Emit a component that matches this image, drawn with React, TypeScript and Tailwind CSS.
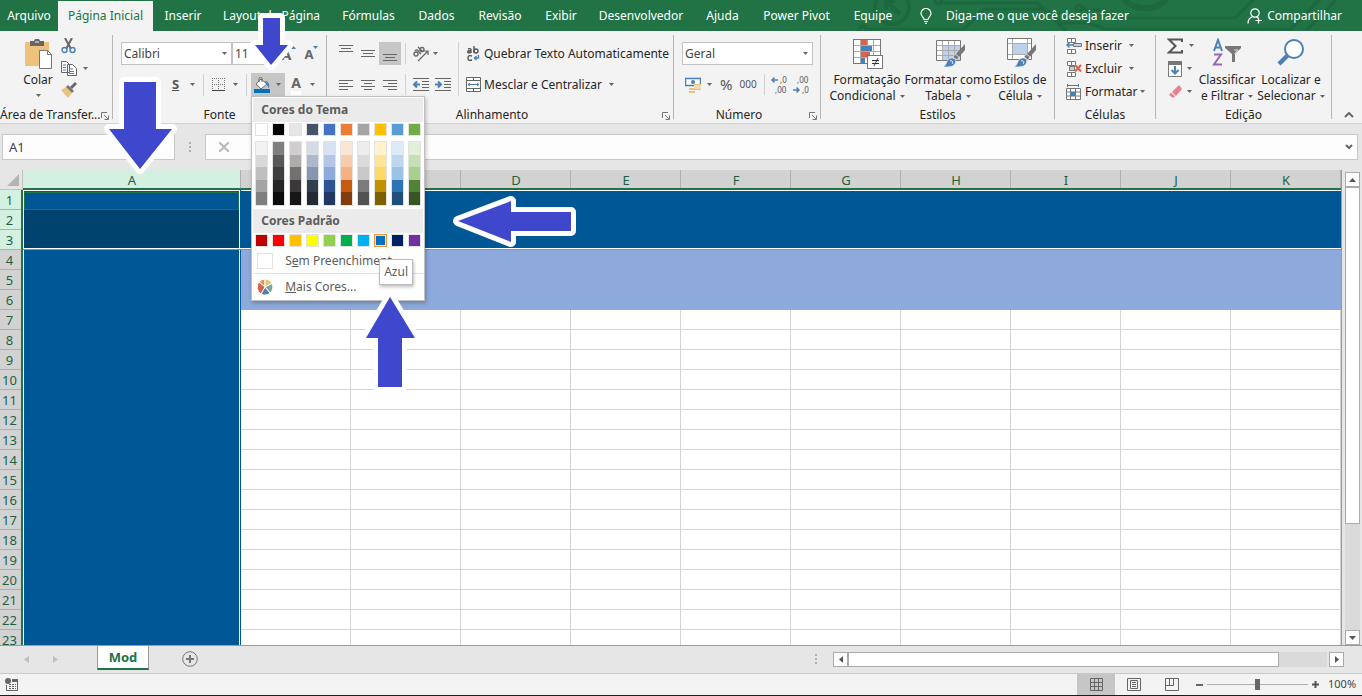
import type { ReactNode } from "react";

const tabs = [
  { label: "Arquivo", width: "w-[58px]" },
  { label: "Página Inicial", width: "w-[95px]", active: true },
  { label: "Inserir", width: "w-[60px]" },
  { label: "Layout da Página", width: "w-[117px]" },
  { label: "Fórmulas", width: "w-[77px]" },
  { label: "Dados", width: "w-[59px]" },
  { label: "Revisão", width: "w-[68px]" },
  { label: "Exibir", width: "w-[54px]" },
  { label: "Desenvolvedor", width: "w-[106px]" },
  { label: "Ajuda", width: "w-[57px]" },
  { label: "Power Pivot", width: "w-[91px]" },
  { label: "Equipe", width: "w-[62px]" },
];

const themeColors = [
  { base: "bg-white", shades: ["bg-[#f2f2f2]", "bg-[#d8d8d8]", "bg-[#bfbfbf]", "bg-[#a5a5a5]", "bg-[#7f7f7f]"] },
  { base: "bg-black", shades: ["bg-[#7f7f7f]", "bg-[#595959]", "bg-[#3f3f3f]", "bg-[#262626]", "bg-[#0c0c0c]"] },
  { base: "bg-[#e7e6e6]", shades: ["bg-[#d0cece]", "bg-[#aeabab]", "bg-[#757070]", "bg-[#3a3838]", "bg-[#171616]"] },
  { base: "bg-[#44546a]", shades: ["bg-[#d6dce4]", "bg-[#adb9ca]", "bg-[#8496b0]", "bg-[#323f4f]", "bg-[#222a35]"] },
  { base: "bg-[#4472c4]", shades: ["bg-[#d9e2f3]", "bg-[#b4c6e7]", "bg-[#8eaadb]", "bg-[#2f5496]", "bg-[#1f3864]"] },
  { base: "bg-[#ed7d31]", shades: ["bg-[#fbe5d5]", "bg-[#f7cbac]", "bg-[#f4b183]", "bg-[#c55a11]", "bg-[#833c0b]"] },
  { base: "bg-[#a5a5a5]", shades: ["bg-[#ededed]", "bg-[#dbdbdb]", "bg-[#c9c9c9]", "bg-[#7b7b7b]", "bg-[#525252]"] },
  { base: "bg-[#ffc000]", shades: ["bg-[#fff2cc]", "bg-[#fee599]", "bg-[#ffd965]", "bg-[#bf9000]", "bg-[#7f6000]"] },
  { base: "bg-[#5b9bd5]", shades: ["bg-[#deebf6]", "bg-[#bdd7ee]", "bg-[#9cc3e5]", "bg-[#2e75b5]", "bg-[#1e4e79]"] },
  { base: "bg-[#70ad47]", shades: ["bg-[#e2efd9]", "bg-[#c5e0b3]", "bg-[#a8d08d]", "bg-[#538135]", "bg-[#375623]"] },
];

const standardColors = [
  { name: "Vermelho-Escuro", fill: "bg-[#c00000]" },
  { name: "Vermelho", fill: "bg-[#ff0000]" },
  { name: "Laranja", fill: "bg-[#ffc000]" },
  { name: "Amarelo", fill: "bg-[#ffff00]" },
  { name: "Verde-Claro", fill: "bg-[#92d050]" },
  { name: "Verde", fill: "bg-[#00b050]" },
  { name: "Azul-Claro", fill: "bg-[#00b0f0]" },
  { name: "Azul", fill: "bg-[#0070c0]", selected: true },
  { name: "Azul-Escuro", fill: "bg-[#002060]" },
  { name: "Roxo", fill: "bg-[#7030a0]" },
];

const columns = ["A", "B", "C", "D", "E", "F", "G", "H", "I", "J", "K"];
const rows = Array.from({ length: 23 }, (_, i) => i + 1);

const arrows = [
  "124,82 156,82 156,129 172,129 140,169 109,129 124,129",
  "263,18 280,18 280,45 288,45 271,65 255,45 263,45",
  "571,212 571,231 511,231 511,242 458,221 511,201 511,212",
  "390,297 415,338 402,338 402,387 378,387 378,338 366,338",
];

function Caret({ className = "" }: { className?: string }) {
  return (
    <svg className={`h-[3px] w-[5px] shrink-0 ${className}`} viewBox="0 0 5 3" fill="#666">
      <path d="M0 0h5L2.5 3z" />
    </svg>
  );
}

function Separator({ className }: { className: string }) {
  return <div className={`w-px shrink-0 bg-[#d0d0d0] ${className}`} />;
}

function Group({ label, width, launcher, children }: { label: string; width: string; launcher?: boolean; children: ReactNode }) {
  return (
    <section className={`flex shrink-0 ${width}`} aria-label={label}>
      <div className="flex min-w-0 flex-1 flex-col">
        <div className="h-[75px]">{children}</div>
        <div className={`relative text-center leading-[17px] whitespace-nowrap ${launcher ? "pr-4" : ""}`}>
          {label}
          {launcher && (
            <button className="absolute right-[3px] top-[6px]" aria-label={`Mais opções de ${label}`}>
              <svg className="size-2" viewBox="0 0 8 8" fill="none" stroke="#777">
                <path d="M.5 6V.5H6M3 3l4 4M7.500 3.500v4h-4" />
              </svg>
            </button>
          )}
        </div>
      </div>
      <div className="my-1 w-px bg-[#b5b5b5]" />
    </section>
  );
}

function Combo({ label, value, width }: { label: string; value: string; width: string }) {
  return (
    <div className={`relative h-[23px] ${width}`}>
      <select aria-label={label} className="size-full appearance-none border border-[#c3c3c3] bg-white pl-[2px] text-[#444]">
        <option>{value}</option>
      </select>
      <Caret className="pointer-events-none absolute right-[5px] top-[10px]" />
    </div>
  );
}

function Lines({ widths, align }: { widths: number[]; align: "start" | "middle" | "end" }) {
  return (
    <svg width="14" height={widths.length * 3} shapeRendering="crispEdges" stroke="#666">
      {widths.map((w, i) => {
        const x = align === "start" ? 0 : align === "end" ? 14 - w : (14 - w) / 2;
        return <path key={i} d={`M${x} ${i * 3 + 1.5}h${w}`} />;
      })}
    </svg>
  );
}

function BigButton({ icon, lines, width }: { icon: ReactNode; lines: [string, string]; width: string }) {
  return (
    <button className={`flex h-[75px] flex-col items-center pt-[7px] leading-4 whitespace-nowrap ${width}`}>
      <span className="flex h-[34px] items-start">{icon}</span>
      <span>{lines[0]}</span>
      <span className="flex items-center gap-1">
        {lines[1]}
        <Caret />
      </span>
    </button>
  );
}

function Brush() {
  return (
    <>
      <path d="M29 6v6l-6 7-3-3z" fill="#777" />
      <path d="M19 16l4 3-2 3-4-3z" fill="#777" stroke="#f3f3f3" strokeWidth=".6" />
      <path d="M7 29c4-1 3-9 9-9 4 0 5 4 2 7-2 2-7 2-11 2z" fill="#4a80b8" stroke="#f3f3f3" strokeWidth=".6" />
      <path d="M14 23c2-1 4 1 2 3" fill="none" stroke="#fff" />
    </>
  );
}

function ColorMenu() {
  return (
    <div className="absolute left-0 top-full z-20 w-[174px] border border-[#c0c0c0] bg-white pt-px text-left text-[#5c5c5c] shadow-[1px_2px_4px_rgba(0,0,0,0.25)]">
      <h3 className="mx-px bg-[#ebebeb] pl-2 font-bold leading-6">Cores do Tema</h3>
      <div className="flex gap-1 px-[3px] pt-px">
        {themeColors.map((c) => (
          <div key={c.base} className="flex flex-col gap-[5px]">
            <button aria-label="Cor do tema" className={`size-[13px] border border-[#e2e2e2] ${c.base}`} />
            <div className="flex h-[65px] w-[13px] flex-col border border-[#e2e2e2]">
              {c.shades.map((s) => (
                <button key={s} aria-label="Tonalidade" className={`flex-1 ${s}`} />
              ))}
            </div>
          </div>
        ))}
      </div>
      <h3 className="mx-px mt-[3px] bg-[#ebebeb] pl-2 font-bold leading-6">Cores Padrão</h3>
      <div className="flex gap-1 px-[3px] pt-px">
        {standardColors.map((c) => (
          <div key={c.name} className="relative flex">
            <button
              aria-label={c.name}
              className={`size-[13px] border ${c.fill} ${c.selected ? "border-[#f29436] shadow-[inset_0_0_0_1px_#ffe294]" : "border-[#e2e2e2]"}`}
            />
            {c.selected && (
              <span className="absolute left-[5px] top-[25px] border border-[#bdbdbd] bg-white px-1 leading-6 shadow-[1px_2px_3px_rgba(0,0,0,0.25)]">
                Azul
              </span>
            )}
          </div>
        ))}
      </div>
      <button className="flex h-[26px] w-full items-center gap-3 pl-[5px] pt-[2px]">
        <span className="size-4 border border-[#e2e2e2]" />
        <span>
          S<u>e</u>m Preenchiment
        </span>
      </button>
      <div className="mx-px h-px bg-[#e2e2e2]" />
      <button className="flex h-[26px] w-full items-center gap-3 pl-[5px]">
        <svg className="size-4" viewBox="0 0 16 16" stroke="#fff">
          <path d="M8 8L2 3A8 8 0 0 1 8 0z" fill="#e8914a" />
          <path d="M8 8V0a8 8 0 0 1 7 4.500z" fill="#ecc078" />
          <path d="M8 8l7-3.500A8 8 0 0 1 13 14z" fill="#78a898" />
          <path d="M8 8l5 6a8 8 0 0 1-9 1z" fill="#4a80b8" />
          <path d="M8 8l-4 7A8 8 0 0 1 2 3z" fill="#d9624a" />
        </svg>
        <span>
          <u>M</u>ais Cores...
        </span>
      </button>
    </div>
  );
}

function TitleBar() {
  return (
    <header className="relative h-[31px] shrink-0 bg-[#217346] text-white">
      <svg className="absolute right-0 top-0 h-[31px] w-[512px]" viewBox="850 0 512 31" fill="none" stroke="#1e683f" strokeWidth="4">
        <circle cx="892" cy="7" r="17" />
        <path d="M900 14L886 1M886 10V1h9" />
        <circle cx="863" cy="29" r="3" strokeWidth="3" />
        <circle cx="938" cy="1" r="3" strokeWidth="3" />
        <path d="M941 3h96l24 20h27l18 6h185l30-31M866 29h98l20-20h60l22 22M1082 7l5 3h12l20 8h116l20-20M1306 31l30-31" strokeWidth="3" />
        <circle cx="1079" cy="8" r="3" strokeWidth="3" />
        <path d="M1122-4a24 17 0 0 0 46 0" strokeWidth="6" />
      </svg>
      <div className="relative flex h-full items-center">
        <nav className="flex h-full items-end">
          {tabs.map((t) => (
            <button
              key={t.label}
              className={`h-[30px] pb-px text-center whitespace-nowrap ${t.width} ${t.active ? "bg-[#f3f3f3] text-[#217346]" : ""}`}
            >
              {t.label}
            </button>
          ))}
        </nav>
        <button className="ml-4 flex items-center gap-[14px] whitespace-nowrap">
          <svg className="h-4 w-3" viewBox="0 0 12 16" fill="none" stroke="#fff" strokeWidth="1.200">
            <path d="M4 11.500C4 9 1 8.500 1 5.500a5 5 0 0 1 10 0C11 8.500 8 9 8 11.500zM4 13.500h4M5 15.300h2" />
          </svg>
          Diga-me o que você deseja fazer
        </button>
        <button className="ml-auto mr-[20px] flex items-center gap-1">
          <svg className="size-4" viewBox="0 0 16 16" fill="none" stroke="#fff" strokeWidth="1.200">
            <circle cx="8" cy="5" r="4.200" />
            <path d="M1 15.500C1 11.500 3 9.500 5.500 8.800M9.500 9l1.500 1M11.500 9.500v6M8.500 12.500h6.500" />
          </svg>
          Compartilhar
        </button>
      </div>
    </header>
  );
}

function Ribbon() {
  return (
    <div className="flex h-[93px] shrink-0 border-b border-[#d2d2d2] bg-[#f3f3f3] text-[#262626]">
      <Group label="Área de Transfer..." width="w-[113px]" launcher>
        <div className="flex">
          <div className="ml-[18px]">
            <button className="flex w-10 flex-col items-center pt-2 leading-4" aria-label="Colar">
              <svg className="h-[33px] w-8" viewBox="0 0 32 33">
                <path d="M3 3h24v24H3z" fill="#ecc27c" />
                <path d="M8 2h4c0-3 6-3 6 0h4v5H8z" fill="#666" />
                <path d="M13 3h4" stroke="#f3f3f3" />
                <path d="M17.500 11.500h8l4 4v14h-12z" fill="#fff" stroke="#777" />
                <path d="M25.500 11.500v4h4" fill="none" stroke="#777" />
              </svg>
              Colar
              <Caret className="mt-[6px]" />
            </button>
          </div>
          <div className="flex flex-col pl-[3px] pt-[6px]">
            <button className="h-[18px]" aria-label="Recortar">
              <svg className="h-4 w-[15px]" viewBox="0 0 15 16" fill="none">
                <path d="M4 0l6 11M11 0L5 11" stroke="#666" strokeWidth="2" />
                <circle cx="3.500" cy="12" r="2.500" stroke="#4a80b8" strokeWidth="1.400" />
                <circle cx="11.500" cy="12" r="2.500" stroke="#4a80b8" strokeWidth="1.400" />
              </svg>
            </button>
            <button className="flex h-[26px] items-center gap-[6px]" aria-label="Copiar">
              <svg className="h-[15px] w-4" viewBox="0 0 16 15" fill="#fff" stroke="#666">
                <path d="M.5.5h5l3 3v8h-8zM6.500 3.500h5l4 4v7h-9z" />
                <path d="M2 4h3M2 6.500h3M2 9h3M8 8h4M8 10.500h5M8 12.500h5" stroke="#4a80b8" />
              </svg>
              <Caret />
            </button>
            <button className="mt-px" aria-label="Pincel de Formatação">
              <svg className="size-4" viewBox="0 0 16 16">
                <path d="M0 8l5-3 6 6-4 5z" fill="#ecc27c" />
                <path d="M5 5l2-2 6 6-2 2z" fill="#777" />
                <path d="M9 5l5-5 2 2-5 5z" fill="#666" />
              </svg>
            </button>
          </div>
        </div>
      </Group>

      <Group label="Fonte" width="w-[214px]">
        <div className="flex flex-col gap-2 pl-2 pt-[11px]">
          <div className="flex items-center">
            <Combo label="Fonte" value="Calibri" width="w-[111px]" />
            <Combo label="Tamanho da fonte" value="11" width="w-[38px]" />
            <button className="ml-[11px] flex items-start text-[15px] font-bold leading-4 text-[#666]" aria-label="Aumentar fonte">
              A
              <svg className="h-[3px] w-[5px]" viewBox="0 0 5 3" fill="#4a80b8">
                <path d="M0 3h5L2.500 0z" />
              </svg>
            </button>
            <button className="ml-2 flex items-start text-[13px] font-bold leading-4 text-[#666]" aria-label="Diminuir fonte">
              A
              <svg className="h-[3px] w-[5px]" viewBox="0 0 5 3" fill="#4a80b8">
                <path d="M0 0h5L2.500 3z" />
              </svg>
            </button>
          </div>
          <div className="flex h-[23px] items-center">
            <button className="ml-[51px] flex items-center gap-[11px] text-[13px] font-bold text-[#555]">
              <u>S</u>
              <Caret />
            </button>
            <Separator className="ml-2 h-[22px]" />
            <button className="ml-2 flex items-center gap-2" aria-label="Bordas">
              <svg className="size-[13px]" viewBox="0 0 13 13" stroke="#777" fill="none" shapeRendering="crispEdges">
                <path d="M0 .5h13M0 6.500h13M.5 0v13M6.500 0v13M12.500 0v13" strokeDasharray="1 1" />
                <path d="M0 12.500h13" stroke="#444" />
              </svg>
              <Caret />
            </button>
            <Separator className="ml-2 h-[22px]" />
            <div className="relative ml-1">
              <button className="flex h-[23px] w-[34px] items-center gap-[6px] bg-[#c6c6c6] pl-[3px]" aria-label="Cor de Preenchimento">
                <svg className="size-4" viewBox="0 0 16 16">
                  <path d="M2 7l5-5 6 5-6 5z" fill="#fff" stroke="#666" />
                  <path d="M5 5V1.500c0-1.500 3-1.500 3 0V5" fill="none" stroke="#666" />
                  <path d="M11 4c3 0 5 3 4 7l-3-4z" fill="#4a80b8" />
                  <path d="M0 12h16v4H0z" fill="#0070c0" />
                </svg>
                <Caret />
              </button>
              <ColorMenu />
            </div>
            <button className="ml-[6px] flex items-center gap-[9px] text-[14px] font-bold text-[#666]" aria-label="Cor da Fonte">
              <span className="border-b-4 border-white leading-4">A</span>
              <Caret />
            </button>
          </div>
        </div>
      </Group>

      <Group label="Alinhamento" width="w-[347px]" launcher>
        <div className="flex pl-2 pt-[11px]">
          <div className="flex flex-col gap-2">
            <div className="flex h-[23px] items-center">
              <button className="h-full w-[22px] pb-[10px] pl-1" aria-label="Alinhar em Cima"><Lines widths={[14, 10, 14]} align="middle" /></button>
              <button className="h-full w-[22px] pl-1" aria-label="Alinhar no Meio"><Lines widths={[14, 10, 14]} align="middle" /></button>
              <button className="h-full w-[22px] bg-[#c6c6c6] pl-1 pt-2" aria-label="Alinhar Embaixo"><Lines widths={[14, 10, 14]} align="middle" /></button>
              <Separator className="ml-1 h-[21px]" />
              <button className="ml-[7px] flex items-center gap-1" aria-label="Orientação">
                <svg className="size-4" viewBox="0 0 16 16" fill="none" stroke="#666">
                  <circle cx="3" cy="8" r="2" strokeWidth="1.400" />
                  <path d="M2 5c1-2 3-1 4 1l2 2M5 1l5 5" strokeWidth="1.400" />
                  <circle cx="9" cy="3.500" r="2" strokeWidth="1.400" />
                  <path d="M5 15L15 5M11 5h4v4" strokeWidth="1.200" />
                </svg>
                <Caret />
              </button>
            </div>
            <div className="flex h-[23px] items-center">
              <button className="w-[22px] pl-1" aria-label="Alinhar à Esquerda"><Lines widths={[14, 9, 14, 9]} align="start" /></button>
              <button className="w-[22px] pl-1" aria-label="Centralizar"><Lines widths={[14, 8, 14, 8]} align="middle" /></button>
              <button className="w-[22px] pl-1" aria-label="Alinhar à Direita"><Lines widths={[14, 9, 14, 9]} align="end" /></button>
              <Separator className="ml-1 h-[21px]" />
              <button className="ml-[7px]" aria-label="Diminuir Recuo">
                <svg className="h-[13px] w-4" viewBox="0 0 16 13" stroke="#666">
                  <path d="M0 .5h16M9 3.500h7M9 6.500h7M9 9.500h7M0 12.500h16" />
                  <path d="M2 6.500h5M4 3.500L1 6.500l3 3" fill="none" stroke="#4a80b8" strokeWidth="2" />
                </svg>
              </button>
              <button className="ml-[6px]" aria-label="Aumentar Recuo">
                <svg className="h-[13px] w-4" viewBox="0 0 16 13" stroke="#666">
                  <path d="M0 .5h16M9 3.500h7M9 6.500h7M9 9.500h7M0 12.500h16" />
                  <path d="M0 6.500h5M3 3.500l3 3-3 3" fill="none" stroke="#4a80b8" strokeWidth="2" />
                </svg>
              </button>
            </div>
          </div>
          <Separator className="ml-[7px] h-[54px]" />
          <div className="ml-[7px] flex flex-col gap-2 whitespace-nowrap">
            <button className="flex h-[23px] items-center gap-[3px]">
              <svg className="size-[15px]" viewBox="0 0 15 15" fill="none" stroke="#555" strokeWidth="1.400">
                <path d="M2 3c3-1 3 0 3 1v3M5 5c-4-1-4 2-2 2l2-1M8 0v7" />
                <circle cx="10" cy="5" r="2" />
                <path d="M6 10c-3-1-4 0-4 2s1 3 4 2" />
                <path d="M12.500 9v3H9M10.500 10l-2 2 2 2" stroke="#4a80b8" />
              </svg>
              Quebrar Texto Automaticamente
            </button>
            <button className="flex h-[23px] items-center gap-[3px]">
              <svg className="size-[15px]" viewBox="0 0 15 15" fill="#fff" stroke="#666">
                <path d="M.5.5h14v14H.5zM.5 3.500h14M.5 11.500h14M7.500.5v3M7.500 11.500v3" />
                <path d="M2 7.500h11M4 6L2 7.500 4 9M11 6l2 1.500L11 9" fill="none" stroke="#4a80b8" />
              </svg>
              Mesclar e Centralizar
              <Caret className="ml-1" />
            </button>
          </div>
        </div>
      </Group>

      <Group label="Número" width="w-[147px]" launcher>
        <div className="flex flex-col gap-2 pl-2 pt-[11px]">
          <Combo label="Formato de número" value="Geral" width="w-[131px]" />
          <div className="flex h-[23px] items-center text-[#555]">
            <button className="ml-[3px] flex items-center gap-[6px]" aria-label="Formato de Contabilização">
              <svg className="size-4" viewBox="0 0 16 16">
                <path d="M.5 1.500h15v7H.5z" fill="#fff" stroke="#4a80b8" strokeWidth="1.500" />
                <circle cx="8" cy="5" r="2" fill="#4a80b8" />
                <path d="M9 7h7v6H9zM4 11h6v5H4z" fill="#ecc27c" />
                <path d="M9 9h7M9 11h7M4 13.500h6" stroke="#f3f3f3" />
              </svg>
              <Caret />
            </button>
            <button className="ml-2 text-[15px]">%</button>
            <button className="ml-[7px] text-[10px]">000</button>
            <Separator className="ml-[7px] h-[21px]" />
            <button className="ml-[6px]" aria-label="Aumentar Casas Decimais">
              <svg className="h-5 w-4 overflow-visible" viewBox="0 0 16 20" fill="#555" fontSize="8">
                <text x="9" y="8">,0</text>
                <text x="4" y="18">,00</text>
                <path d="M1 5h6M3.500 2.500L1 5l2.500 2.500" fill="none" stroke="#4a80b8" strokeWidth="1.500" />
              </svg>
            </button>
            <button className="ml-[6px]" aria-label="Diminuir Casas Decimais">
              <svg className="h-5 w-4 overflow-visible" viewBox="0 0 16 20" fill="#555" fontSize="8">
                <text x="4" y="8">,00</text>
                <text x="9" y="18">,0</text>
                <path d="M0 15h6M3.500 12.500L6 15l-2.500 2.500" fill="none" stroke="#4a80b8" strokeWidth="1.500" />
              </svg>
            </button>
          </div>
        </div>
      </Group>

      <Group label="Estilos" width="w-[234px]">
        <div className="flex pl-[6px]">
          <BigButton
            width="w-20"
            lines={["Formatação", "Condicional"]}
            icon={
              <svg className="size-[31px]" viewBox="0 0 31 31" shapeRendering="crispEdges">
                <path d="M1.500 1.500h27v24h-27z" fill="#fff" />
                <path d="M9 2h6v5H9zM9 14h9v5H9z" fill="#d9624a" />
                <path d="M9 8h11v5H9zM9 20h4v6H9z" fill="#4a80b8" />
                <path d="M1 7.500h28M1 13.500h28M1 19.500h28M8.500 1v25M15.500 1v6M21.500 1v25" fill="none" stroke="#aaa" />
                <path d="M1.500 1.500h27v24h-27z" fill="none" stroke="#777" />
                <path d="M15.500 17.500h15v13h-15z" fill="#fff" stroke="#777" />
                <path d="M20 22.500h7M20 25.500h7" stroke="#333" />
                <path d="M26 20l-4 8" stroke="#333" shapeRendering="auto" />
              </svg>
            }
          />
          <BigButton
            width="w-[82px]"
            lines={["Formatar como", "Tabela"]}
            icon={
              <svg className="ml-[6px] size-[30px]" viewBox="0 0 30 30">
                <path d="M.5 2.500h24v20H.5z" fill="#fff" />
                <path d="M7 8h18v14H7z" fill="#bdd2ea" />
                <path d="M0 7.500h24M0 12.500h24M0 17.500h24M6.500 2v20M12.500 2v20M18.500 2v20" stroke="#aaa" />
                <path d="M.5 2.500h24v20H.5z" fill="none" stroke="#777" />
                <Brush />
              </svg>
            }
          />
          <BigButton
            width="w-[62px]"
            lines={["Estilos de", "Célula"]}
            icon={
              <svg className="ml-1 size-[30px]" viewBox="0 0 30 30">
                <path d="M.5.5h24v21H.5z" fill="#fff" />
                <path d="M6 6h14v10H6z" fill="#bdd2ea" />
                <path d="M0 5.500h24M0 16.500h24M5.500 0v22M20.500 0v22" stroke="#aaa" />
                <path d="M.5.5h24v21H.5z" fill="none" stroke="#777" />
                <Brush />
              </svg>
            }
          />
        </div>
      </Group>

      <Group label="Células" width="w-[101px]">
        <div className="flex flex-col pl-[11px] pt-[3px]">
          <button className="flex h-[23px] items-center gap-[3px]">
            <svg className="size-4" viewBox="0 0 16 16" fill="#fff" stroke="#777">
              <path d="M1.500.5h8v4h-8zM5.500.5v4M1.500 11.500h8v4h-8zM5.500 11.500v4" />
              <path d="M7.500 5.500h8v3h-8z" fill="#bdd2ea" />
              <path d="M1 7h6M3.500 4.500L1 7l2.500 2.500" fill="none" stroke="#4a80b8" strokeWidth="1.500" />
            </svg>
            Inserir
            <Caret className="ml-1" />
          </button>
          <button className="flex h-[23px] items-center gap-[3px]">
            <svg className="size-4" viewBox="0 0 16 16" fill="#fff" stroke="#777">
              <path d="M1.500.5h8v4h-8zM5.500.5v4M1.500 11.500h8v4h-8zM5.500 11.500v4" />
              <path d="M3.500 5.500h5v4h-5z" fill="#bdd2ea" />
              <path d="M9 4l6 6.500M15 4L9 10.500" stroke="#d9624a" strokeWidth="2" />
            </svg>
            Excluir
            <Caret className="ml-1" />
          </button>
          <button className="flex h-[23px] items-center gap-[3px]">
            <svg className="size-4" viewBox="0 0 16 16" fill="#fff" stroke="#777">
              <path d="M.5 4.500h14v11H.5zM.5 8h14M.5 12h14M4.500 4.500v11M9.500 4.500v11" />
              <path d="M4 8h6v4H4z" fill="#4a80b8" stroke="none" />
              <path d="M1 1.500h12M1.500 0v3M12.500 0v3" stroke="#4a80b8" />
            </svg>
            Formatar
            <Caret />
          </button>
        </div>
      </Group>

      <Group label="Edição" width="w-[176px]">
        <div className="flex pl-[11px]">
          <div className="flex w-[27px] flex-col pt-[3px]">
            <button className="flex h-[23px] items-center gap-[6px]" aria-label="AutoSoma">
              <svg className="size-4" viewBox="0 0 16 16" fill="none" stroke="#555" strokeWidth="2">
                <path d="M15 4V1.500H2L8.500 8 2 14.500h13V12" />
              </svg>
              <Caret />
            </button>
            <button className="flex h-[23px] items-center gap-1" aria-label="Preencher">
              <svg className="size-4" viewBox="0 0 16 16" fill="#fff" stroke="#777">
                <path d="M1.500.5h13v15h-13z" />
                <path d="M1.500.5h13v3h-13z" fill="#777" />
                <path d="M8 5v7M4.500 9L8 12.500 11.500 9" fill="none" stroke="#4a80b8" strokeWidth="2" />
              </svg>
              <Caret />
            </button>
            <button className="flex h-[23px] items-center gap-1" aria-label="Limpar">
              <svg className="size-4" viewBox="0 0 16 16">
                <path d="M5 8l7-7 3 4-6 7z" fill="#e88090" />
                <path d="M4 8.500l4 4L6 14 2 11z" fill="#e88090" />
              </svg>
              <Caret />
            </button>
          </div>
          <BigButton
            width="w-[66px]"
            lines={["Classificar", "e Filtrar"]}
            icon={
              <svg className="h-[30px] w-8" viewBox="0 0 32 30" fill="none">
                <path d="M3 13L7 2l4 11M4.500 9.500h5" stroke="#4a80b8" strokeWidth="2" />
                <path d="M3 16.500h7L3 26.500h8" stroke="#9a64b8" strokeWidth="2" />
                <path d="M14 8h16v2l-6 6v8h-3v-8l-7-6z" fill="#777" />
                <path d="M23 12h4l-3.500 4" stroke="#ddd" />
              </svg>
            }
          />
          <BigButton
            width="w-[62px]"
            lines={["Localizar e", "Selecionar"]}
            icon={
              <svg className="h-[30px] w-8" viewBox="0 0 32 30" fill="none" stroke="#4a80b8">
                <path d="M4 26l9-9" strokeWidth="4.500" />
                <circle cx="19" cy="11" r="9" fill="#fff" strokeWidth="2" />
              </svg>
            }
          />
        </div>
      </Group>

      <button className="ml-auto mr-2 mt-auto mb-[5px]" aria-label="Recolher a Faixa de Opções">
        <svg className="h-[6px] w-[10px]" viewBox="0 0 10 6" fill="none" stroke="#666" strokeWidth="2">
          <path d="M1 5l4-4 4 4" />
        </svg>
      </button>
    </div>
  );
}

function FormulaBar() {
  return (
    <div className="flex h-[46px] shrink-0 items-start bg-[#e6e6e6] pl-[2px] pr-1 pt-[10px] text-[13px] text-[#444]">
      <input aria-label="Caixa de nome" defaultValue="A1" className="h-[26px] w-[173px] border border-[#c8c8c8] bg-[#fdfdfd] px-[6px]" />
      <svg className="ml-[14px] mt-2 h-[11px] w-[3px]" fill="#b0b0b0">
        <path d="M0 0h2v2H0zM0 4h2v2H0zM0 8h2v2H0z" />
      </svg>
      <div className="ml-[13px] flex h-[26px] flex-1 items-center border border-[#c8c8c8] bg-[#fdfdfd]">
        <button className="ml-[13px]" aria-label="Cancelar">
          <svg className="size-[10px]" viewBox="0 0 10 10" stroke="#b8b8b8" strokeWidth="2">
            <path d="M0 0l10 10M10 0L0 10" />
          </svg>
        </button>
        <input aria-label="Barra de fórmulas" className="h-full flex-1 bg-transparent px-2 outline-none" />
        <button className="mr-1" aria-label="Expandir barra de fórmulas">
          <svg className="h-[6px] w-2" viewBox="0 0 8 6" fill="none" stroke="#666" strokeWidth="2">
            <path d="M1 1l3 3 3-3" />
          </svg>
        </button>
      </div>
    </div>
  );
}

// the selection frame is drawn with inset shadows so it runs unbroken across rows
function cellClass(row: number, col: number) {
  if (col === 0) {
    if (row === 1) return "bg-[#005796] shadow-[inset_-1px_0_0_#005796,inset_-2px_0_0_#fff,inset_1px_1px_0_#fff]";
    if (row === 2) return "bg-[#00436f] shadow-[inset_-1px_0_0_#005796,inset_-2px_0_0_#fff,inset_1px_0_0_#fff]";
    if (row === 3) return "bg-[#00436f] shadow-[inset_0_-1px_0_#7f93ad,inset_0_-2px_0_#fff,inset_-1px_0_0_#005796,inset_-2px_0_0_#fff,inset_1px_0_0_#fff]";
    return "bg-[#005796] shadow-[inset_-1px_0_0_#005796,inset_-2px_0_0_#fff,inset_1px_0_0_#fff]";
  }
  if (row === 1) return "bg-[#005796] shadow-[inset_0_1px_0_#fff]";
  if (row === 2) return "bg-[#005796]";
  if (row === 3) return "bg-[#005796] shadow-[inset_0_-1px_0_#7f93ad,inset_0_-2px_0_#fff]";
  if (row <= 6) return "bg-[#8ea9db]";
  return "border-b border-r border-[#d4d4d4] bg-white";
}

function Sheet() {
  return (
    <main className="flex min-h-0 flex-1 bg-[#e6e6e6]">
      <div className="min-w-0 flex-1 overflow-hidden">
        <table className="w-full table-fixed border-separate border-spacing-0 text-[13px] leading-[18px] text-[#1f5f43]">
          <colgroup>
            <col className="w-[23px]" />
            <col className="w-[218px]" />
            {columns.slice(1).map((c) => (
              <col key={c} />
            ))}
          </colgroup>
          <thead>
            <tr>
              <th className="h-5 border-b border-r border-[#c0c0c0] bg-[#e6e6e6] p-0 pl-[7px]" aria-label="Selecionar tudo">
                <svg className="size-3" viewBox="0 0 12 12" fill="#b4b4b4">
                  <path d="M12 0v12H0z" />
                </svg>
              </th>
              {columns.map((c, i) => (
                <th
                  key={c}
                  className={`h-5 p-0 font-normal shadow-[inset_0_-2px_0_#217346,inset_-1px_0_0_#b0b0b0] ${i === 0 ? "bg-[#d3f0e0]" : "bg-[#d2d2d2]"}`}
                >
                  {c}
                </th>
              ))}
            </tr>
          </thead>
          <tbody>
            {rows.map((r) => (
              <tr key={r}>
                <th
                  className={`h-5 p-0 pr-1 font-normal shadow-[inset_-2px_0_0_#217346,inset_0_-1px_0_#b0b0b0] ${r <= 3 ? "bg-[#d3f0e0]" : "bg-[#d2d2d2]"}`}
                >
                  {r}
                </th>
                {columns.map((c, i) => (
                  <td key={c} className={`p-0 ${cellClass(r, i)}`}>
                    {r === 1 && i === 0 && <div className="ml-px mr-[2px] mt-px h-[18px] border border-[#217346]" />}
                  </td>
                ))}
              </tr>
            ))}
          </tbody>
        </table>
      </div>
      <div className="flex w-[21px] justify-end border-l border-[#9b9b9b] pr-[2px] pt-[2px]">
        <div className="flex w-[15px] flex-col bg-[#dadada]">
          <button className="flex h-[15px] items-center justify-center border border-[#ababab] bg-white" aria-label="Rolar para cima">
            <svg className="h-1 w-[7px]" viewBox="0 0 7 4" fill="#555"><path d="M0 4h7L3.500 0z" /></svg>
          </button>
          <div className="h-[337px] border border-[#ababab] bg-white" />
          <button className="mt-auto flex h-[15px] items-center justify-center border border-[#ababab] bg-white" aria-label="Rolar para baixo">
            <svg className="h-1 w-[7px]" viewBox="0 0 7 4" fill="#555"><path d="M0 0h7L3.500 4z" /></svg>
          </button>
        </div>
      </div>
    </main>
  );
}

function SheetTabs() {
  return (
    <div className="flex h-7 shrink-0 items-start border-t border-[#9b9b9b] bg-[#e6e6e6]">
      <div className="flex w-[97px] gap-6 pl-6 pt-[10px]">
        <button aria-label="Planilha anterior">
          <svg className="h-[7px] w-[5px]" viewBox="0 0 5 7" fill="#c0c0c0"><path d="M5 0v7L0 3.500z" /></svg>
        </button>
        <button aria-label="Próxima planilha">
          <svg className="h-[7px] w-[5px]" viewBox="0 0 5 7" fill="#c0c0c0"><path d="M0 0v7l5-3.500z" /></svg>
        </button>
      </div>
      <button className="h-6 w-[52px] border-x border-b-2 border-x-[#9b9b9b] border-b-[#217346] bg-white pt-[2px] text-[13px] font-bold text-[#217346]">
        Mod
      </button>
      <button className="ml-[33px] mt-[5px]" aria-label="Nova planilha">
        <svg className="size-4" viewBox="0 0 16 16" fill="none" stroke="#777">
          <circle cx="8" cy="8" r="7.300" />
          <path d="M4 8h8M8 4v8" strokeWidth="2" />
        </svg>
      </button>
      <div className="ml-auto mr-[18px] mt-[6px] flex items-start">
        <svg className="mr-4 mt-[2px] h-[11px] w-[2px]" fill="#b0b0b0">
          <path d="M0 0h2v2H0zM0 4h2v2H0zM0 8h2v2H0z" />
        </svg>
        <button className="flex size-[15px] items-center justify-center border border-[#ababab] bg-white" aria-label="Rolar para a esquerda">
          <svg className="h-[7px] w-1" viewBox="0 0 4 7" fill="#555"><path d="M4 0v7L0 3.500z" /></svg>
        </button>
        <div className="h-[15px] w-[431px] border border-[#ababab] bg-white" />
        <div className="h-[15px] w-[48px] bg-[#dadada]" />
        <button className="ml-[2px] flex size-[15px] items-center justify-center border border-[#ababab] bg-white" aria-label="Rolar para a direita">
          <svg className="h-[7px] w-1" viewBox="0 0 4 7" fill="#555"><path d="M0 0v7l4-3.500z" /></svg>
        </button>
      </div>
    </div>
  );
}

function StatusBar() {
  return (
    <footer className="flex h-[23px] shrink-0 items-center border-b border-t border-b-[#1b1b22] border-t-[#c8c8c8] bg-[#f3f3f3] text-[#444]">
      <button className="ml-[5px]" aria-label="Gravar macro">
        <svg className="h-[13px] w-[14px]" viewBox="0 0 14 13" fill="#666">
          <circle cx="3" cy="3" r="3" />
          <path d="M7 1h6v3H7z" />
          <path d="M4 6.500h7M4 8.500h7M4 10.500h7" fill="none" stroke="#666" strokeDasharray="2 1" />
          <path d="M1.500 7v5.500h11V4" fill="none" stroke="#666" />
        </svg>
      </button>
      <div className="ml-auto flex h-full items-center">
        <button className="flex h-full w-[38px] items-center justify-center bg-[#c6c6c6]" aria-label="Normal">
          <svg className="size-[13px]" viewBox="0 0 13 13" fill="none" stroke="#666">
            <path d="M.5.5h12v12H.5zM.5 4.500h12M.5 8.500h12M4.500.5v12M8.500.5v12" />
          </svg>
        </button>
        <button className="flex w-[38px] justify-center" aria-label="Layout da Página">
          <svg className="h-[13px] w-[14px]" viewBox="0 0 14 13" fill="none" stroke="#666">
            <path d="M.5.5h13v12H.5zM3.500 2.500h7v8h-7zM5 4.500h4M5 6.500h4M5 8.500h4" />
          </svg>
        </button>
        <button className="flex w-[38px] justify-center" aria-label="Visualização da Quebra de Página">
          <svg className="h-[13px] w-[14px]" viewBox="0 0 14 13" fill="none" stroke="#666">
            <path d="M.5.5h13v12H.5zM.5 7.500h8V.5M4.500.5v7" />
          </svg>
        </button>
        <button className="ml-[5px] h-[2px] w-[7px] bg-[#666]" aria-label="Reduzir" />
        <input
          type="range"
          aria-label="Zoom"
          defaultValue={50}
          className="mx-1 h-3 w-[101px] appearance-none bg-transparent bg-[linear-gradient(#b0b0b0,#b0b0b0)] bg-[length:100%_1px] bg-center bg-no-repeat [&::-webkit-slider-thumb]:h-[11px] [&::-webkit-slider-thumb]:w-[5px] [&::-webkit-slider-thumb]:appearance-none [&::-webkit-slider-thumb]:bg-[#666]"
        />
        <button aria-label="Ampliar">
          <svg className="size-[7px]" viewBox="0 0 7 7" stroke="#555" strokeWidth="2"><path d="M0 3.500h7M3.500 0v7" /></svg>
        </button>
        <span className="ml-[9px] mr-[6px] w-7 text-[11px]">100%</span>
      </div>
    </footer>
  );
}

export default function App() {
  return (
    <div className="relative flex h-screen flex-col overflow-hidden font-['Noto_Sans',sans-serif] text-[12px]">
      <TitleBar />
      <Ribbon />
      <FormulaBar />
      <Sheet />
      <SheetTabs />
      <StatusBar />
      <svg className="pointer-events-none absolute left-0 top-0 z-30 h-[400px] w-[600px]" strokeLinejoin="round">
        {arrows.map((points) => (
          <g key={points}>
            <polygon points={points} fill="#fff" stroke="#fff" strokeWidth="10" />
            <polygon points={points} fill="#3f48cc" />
          </g>
        ))}
      </svg>
    </div>
  );
}
